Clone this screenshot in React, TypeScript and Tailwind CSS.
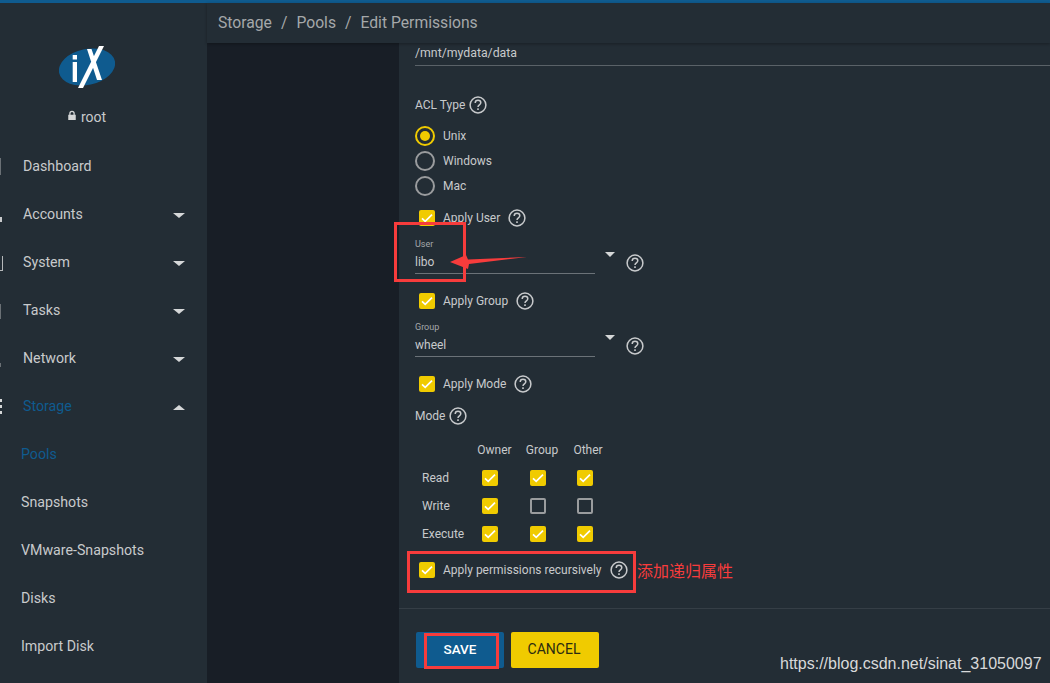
const Y = "#f0cb00"

function Help({ className = "" }: { className?: string }) {
  return (
    <svg viewBox="0 0 18 18" className={`w-[18px] h-[18px] shrink-0 ${className}`} fill="none">
      <circle cx="9" cy="9" r="7.9" stroke="#c8cacc" strokeWidth="1.5" />
      <path d="M6.200 7c0-1.600 1.200-2.700 2.800-2.700s2.800 1.100 2.800 2.500c0 2-2.800 2.100-2.800 4.200" stroke="#c8cacc" strokeWidth="1.500" />
      <rect x="8.200" y="12.300" width="1.600" height="1.700" fill="#c8cacc" />
    </svg>
  )
}

function Check({ on = true }: { on?: boolean }) {
  if (!on) return <div className="w-4 h-4 rounded-[2px] border-2 border-[#9a9c9e] shrink-0" />
  return (
    <div className="w-4 h-4 rounded-[2px] shrink-0 flex items-center justify-center" style={{ background: Y }}>
      <svg viewBox="0 0 16 16" className="w-4 h-4" fill="none">
        <path d="M3 8.400l3.200 3L13 4.600" stroke="#fff" strokeWidth="1.700" />
      </svg>
    </div>
  )
}

function Radio({ label, on = false }: { label: string; on?: boolean }) {
  return (
    <div className="h-[25px] flex items-center">
      <div className={`w-5 h-5 rounded-full border-2 flex items-center justify-center ${on ? "border-[#f0cb00]" : "border-[#9a9c9e]"}`}>
        {on && <div className="w-[10px] h-[10px] rounded-full bg-[#f0cb00]" />}
      </div>
      <span className="ml-2 text-xs text-[#c8cacc]">{label}</span>
    </div>
  )
}

function ApplyRow({ label, className = "" }: { label: string; className?: string }) {
  return (
    <div className={`flex items-center pl-1 h-4 ${className}`}>
      <Check />
      <span className="ml-2 text-xs text-[#c8cacc]">{label}</span>
      <Help className="ml-[8px]" />
    </div>
  )
}

function SelectField({ label, value, className = "" }: { label: string; value: string; className?: string }) {
  return (
    <div className={`flex ${className}`}>
      <div className="w-[180px] border-b border-[#6b7278] h-[40px] pt-[4px]">
        <div className="text-[9px] leading-[12px] text-[#a5a8aa]">{label}</div>
        <div className="text-xs leading-[14px] mt-[5px] text-[#c8cacc]">{value}</div>
      </div>
      <div className="ml-[10px] mt-[18px] w-0 h-0 border-x-[5px] border-x-transparent border-t-[5px] border-t-[#d5d7d8]" />
      <Help className="ml-[11px] mt-[20px]" />
    </div>
  )
}

const nav = [
  { label: "Dashboard", stub: "top-[15px] h-[17px] w-px bg-[#6a7075]" },
  { label: "Accounts", caret: "down", stub: "top-[26px] h-[5px] w-[2px] bg-[#c8cacc]" },
  { label: "System", caret: "down", stub: "top-[17px] h-[15px] w-[3px] border-r border-b border-[#b5b8ba]" },
  { label: "Tasks", caret: "down", stub: "top-[17px] h-[15px] w-px bg-[#6a7075]" },
  { label: "Network", caret: "down", stub: "top-[28px] h-[4px] w-px bg-[#6a7075]" },
  { label: "Storage", caret: "up", active: true, stub: "top-[16px] h-[16px] w-[2px] bg-[repeating-linear-gradient(#d5d7d8_0_3px,transparent_3px_6px)]" },
]
const subNav = ["Pools", "Snapshots", "VMware-Snapshots", "Disks", "Import Disk"]

const modes = [
  { label: "Read", vals: [true, true, true] },
  { label: "Write", vals: [true, false, false] },
  { label: "Execute", vals: [true, true, true] },
]

export default function App() {
  return (
    <div className="relative w-[1050px] h-[683px] overflow-hidden bg-[#232d35] font-['Roboto',sans-serif]">
      <div className="h-[3px] bg-[#0f5b8f]" />
      <div className="flex h-[680px]">
        {/* Sidebar */}
        <aside className="w-[207px] shrink-0 bg-[#232d35]">
          <div className="pt-[43px] pl-[59px]">
            <svg viewBox="0 0 56 42" className="w-[56px] h-[42px] block">
              <ellipse cx="28" cy="21" rx="28.500" ry="18" fill="#0f5b8f" transform="rotate(-12 28 21)" />
              <rect x="13.700" y="9" width="4.300" height="4.500" fill="#fff" />
              <rect x="13.700" y="16" width="4.300" height="20" fill="#fff" />
              <path d="M28 3h4.500L43 34h-5zM40 0h5L24 42h-5z" fill="#fff" />
            </svg>
          </div>
          <div className="mt-[21px] flex items-center h-4 pl-[67px] text-[14px] text-[#c8cacc]">
            <svg viewBox="0 0 12 12" className="w-[10px] h-[11px] mr-[4px] -mt-[3px]" fill="#d5d7d8">
              <path d="M1.500 5h1.200V3.500a3.300 3.300 0 0 1 6.600 0V5h1.200v6.500h-9zM4.200 5h3.600V3.500a1.800 1.800 0 0 0-3.600 0z" />
            </svg>
            root
          </div>
          <nav className="mt-[18px]">
            {nav.map((n) => (
              <div key={n.label} className="relative h-12 flex items-center pl-[23px] pr-[22px]">
                <span className={`text-[14.2px] ${n.active ? "text-[#0f5b8f]" : "text-[#c8cacc]"}`}>{n.label}</span>
                {n.caret && (
                  <div
                    className={`ml-auto w-0 h-0 border-x-[6px] border-x-transparent ${n.caret === "down" ? "border-t-[5px] border-t-[#d5d7d8]" : "border-b-[5px] border-b-[#d5d7d8]"}`}
                  />
                )}
                {/* icon cut off at the window edge */}
                <div className={`absolute left-0 ${n.stub}`} />
              </div>
            ))}
            {subNav.map((s, i) => (
              <div key={s} className="h-12 flex items-center pl-[21px]">
                <span className={`text-[14.2px] ${i === 0 ? "text-[#0f5b8f]" : "text-[#c8cacc]"}`}>{s}</span>
              </div>
            ))}
          </nav>
        </aside>

        <div className="flex-1 flex flex-col min-w-0">
          {/* Breadcrumb */}
          <header className="h-[40px] shrink-0 bg-[#232d35] flex items-center pl-[11px] text-[15.7px] text-[#a5a8aa] shadow-[0_1px_3px_rgba(0,0,0,0.3)] z-10">
            <span>Storage</span>
            <span className="mx-[9px]">/</span>
            <span>Pools</span>
            <span className="mx-[9px]">/</span>
            <span>Edit Permissions</span>
          </header>

          <main className="flex-1 flex bg-[#181e26] min-h-0">
            <div className="w-[192px] shrink-0" />
            <div className="flex-1 bg-[#232d35] flex flex-col">
              <div className="pl-4 h-[565px]">
                <div className="h-[23px] border-b border-[#5a6268] text-[12.3px] text-[#c8cacc] pt-[1px]">/mnt/mydata/data</div>

                <div className="mt-[30px] flex items-center h-[18px] text-xs text-[#c8cacc]">
                  ACL Type
                  <Help className="ml-[4px]" />
                </div>

                <div className="mt-[9px]">
                  <Radio label="Unix" on />
                  <Radio label="Windows" />
                  <Radio label="Mac" />
                </div>

                <ApplyRow label="Apply User" className="mt-[12px]" />
                <SelectField label="User" value="libo" className="mt-[8px]" />
                <ApplyRow label="Apply Group" className="mt-[19px]" />
                <SelectField label="Group" value="wheel" className="mt-[8px]" />
                <ApplyRow label="Apply Mode" className="mt-[19px]" />

                <div className="mt-[15px] flex items-center h-[18px] text-xs text-[#c8cacc]">
                  Mode
                  <Help className="ml-[4px]" />
                </div>

                <div className="mt-[17px] w-[190px] text-xs text-[#c8cacc]">
                  <div className="grid grid-cols-[51px_48px_47px_47px] h-[14px] items-center">
                    <span />
                    <span className="text-center pl-[9px] whitespace-nowrap">Owner</span>
                    <span className="text-center pl-[9px]">Group</span>
                    <span className="text-center pl-[7px]">Other</span>
                  </div>
                  <div className="mt-[8px]">
                    {modes.map((m) => (
                      <div key={m.label} className="grid grid-cols-[51px_48px_47px_47px] h-[28px] items-center">
                        <span className="pl-[7px]">{m.label}</span>
                        {m.vals.map((v, i) => (
                          <div key={i} className="flex justify-center">
                            <Check on={v} />
                          </div>
                        ))}
                      </div>
                    ))}
                  </div>
                </div>

                <ApplyRow label="Apply permissions recursively" className="mt-[14px]" />
              </div>

              <div className="border-t border-[#353e46] pl-[17px] pt-[23px] flex gap-[7px]">
                <button className="w-[88px] h-9 rounded-[2px] bg-[#0f5b8f] text-white text-[13.5px] font-medium pb-[2px]">SAVE</button>
                <button className="w-[88px] h-9 rounded-[2px] bg-[#f0cb00] text-[#2b2b10] text-[14px] pr-[2px] pb-[2px]">CANCEL</button>
              </div>
            </div>
          </main>
        </div>
      </div>

      {/* Red annotations drawn on top of the screenshot */}
      <div className="absolute left-[394px] top-[222px] w-[72px] h-[60px] border-[3px] border-[#f73c3c]" />
      <div className="absolute left-[407px] top-[551px] w-[229px] h-[42px] border-[3px] border-[#f73c3c]" />
      <div className="absolute left-[424px] top-[633px] w-[75px] h-[36px] border-[3px] border-[#f73c3c]" />
      <svg className="absolute left-[448px] top-[250px] w-[80px] h-[24px]" viewBox="0 0 80 24">
        <path d="M2 12L18 5l2 4.500L79 7 21 14l-1 5z" fill="#f73c3c" />
      </svg>
      <div className="absolute left-[637px] top-[560px] text-base leading-5 text-[#f73c3c] font-['Noto_Sans_CJK_SC',sans-serif]">添加递归属性</div>
      <div className="absolute left-[780px] top-[654px] text-[16px] leading-5 text-[#d8d9da] font-['Liberation_Sans',sans-serif]">https://blog.csdn.net/sinat_31050097</div>
    </div>
  )
}
